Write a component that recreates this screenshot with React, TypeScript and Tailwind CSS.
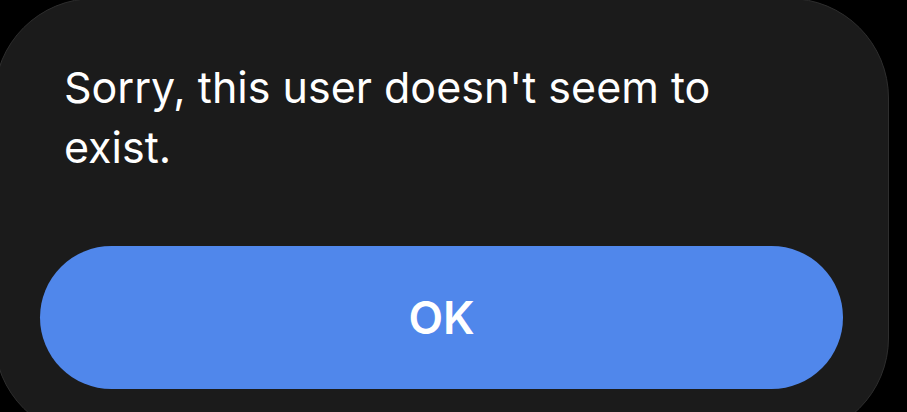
export default function App() {
  return (
    <div className="h-[412px] w-[907px] overflow-hidden bg-black font-['Inter','Roboto',sans-serif]">
      <div className="-ml-[6px] -mt-[2px] flex h-[440px] w-[895px] flex-col rounded-[100px] border border-[#2e2e2e] bg-[#1b1b1b] pt-[58px]">
        <p className="pl-[69px] pr-[150px] text-[43px] leading-[60px] text-white">
          Sorry, this user doesn't seem to exist.
        </p>
        <button className="ml-[45px] mt-[69px] flex h-[143px] w-[803px] items-center justify-center rounded-full bg-[#5087eb] text-[45px] font-semibold text-white">
          OK
        </button>
      </div>
    </div>
  )
}
